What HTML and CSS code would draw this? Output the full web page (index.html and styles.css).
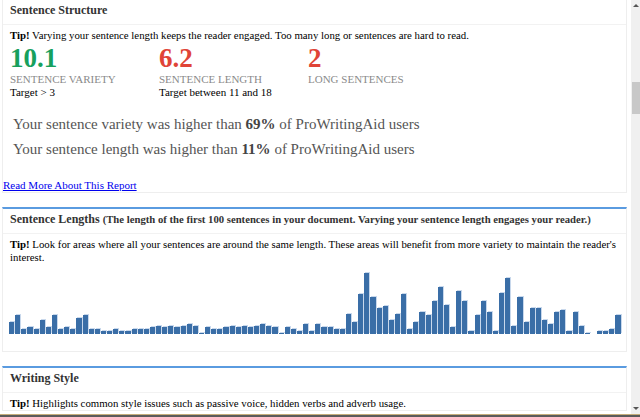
FILE: index.html
```html
<!DOCTYPE html>
<html lang="en">
<head>
  <meta charset="UTF-8">
  <title>Sentence Structure Report</title>
  <link rel="stylesheet" href="styles.css">
</head>
<body>
  <div class="page">
    <main class="report">
      <!-- Sentence Structure -->
      <section class="panel panel-top">
        <div class="panel-head">
          <h2>Sentence Structure</h2>
        </div>
        <div class="panel-body">
          <p class="tip"><b>Tip!</b> Varying your sentence length keeps the reader engaged. Too many long or sentences are hard to read.</p>
          <div class="stats">
            <div class="stat">
              <div class="stat-value good">10.1</div>
              <div class="stat-label">Sentence Variety</div>
              <div class="stat-target">Target &gt; 3</div>
            </div>
            <div class="stat">
              <div class="stat-value bad">6.2</div>
              <div class="stat-label">Sentence Length</div>
              <div class="stat-target">Target between 11 and 18</div>
            </div>
            <div class="stat">
              <div class="stat-value bad">2</div>
              <div class="stat-label">Long Sentences</div>
            </div>
          </div>
          <div class="compare">
            <p>Your sentence variety was higher than <b>69%</b> of ProWritingAid users</p>
            <p>Your sentence length was higher than <b>11%</b> of ProWritingAid users</p>
          </div>
        </div>
        <a class="more" href="#">Read More About This Report</a>
      </section>

      <!-- Sentence Lengths -->
      <section class="panel">
        <div class="panel-head">
          <h2>Sentence Lengths <small>(The length of the first 100 sentences in your document. Varying your sentence length engages your reader.)</small></h2>
        </div>
        <div class="panel-body">
          <p class="tip"><b>Tip!</b> Look for areas where all your sentences are around the same length. These areas will benefit from more variety to maintain the reader's interest.</p>
          <div class="chart" id="chart"></div>
        </div>
      </section>

      <!-- Writing Style -->
      <section class="panel">
        <div class="panel-head">
          <h2>Writing Style</h2>
        </div>
        <div class="panel-body">
          <p class="tip"><b>Tip!</b> Highlights common style issues such as passive voice, hidden verbs and adverb usage.</p>
        </div>
      </section>
    </main>

    <div class="scrollbar">
      <span class="arrow up"></span>
      <span class="thumb"></span>
      <span class="arrow down"></span>
    </div>
  </div>
  <div class="taskbar"></div>

  <script>
    // sentence lengths (in px) for the first 100 sentences
    const lengths = [12,19,5,7,5,14,7,19,5,7,5,16,19,5,5,3,3,5,3,3,
      5,5,5,7,8,7,8,7,8,10,8,1,7,5,5,7,8,7,8,7,
      8,10,8,7,1,7,5,3,10,3,10,7,7,5,5,20,12,40,61,37,
      26,28,14,20,40,5,12,22,19,33,47,29,7,43,33,3,19,33,22,3,
      41,56,8,37,12,26,26,14,10,22,24,3,22,8,1,0,3,3,5,19];

    const chart = document.getElementById('chart');
    lengths.forEach((h) => {
      const bar = document.createElement('span');
      bar.className = 'bar';
      bar.style.height = h + 'px';
      chart.appendChild(bar);
    });
  </script>
</body>
</html>
```

FILE: styles.css
```css
/* General */
* {
  margin: 0;
  padding: 0;
  box-sizing: border-box;
}

html, body {
  height: 100%;
  overflow: hidden;
}

body {
  font-family: 'Liberation Serif', 'Times New Roman', serif;
  font-size: 10.8px;
  color: #000;
  background: #fff;
}

.page {
  display: flex;
  height: 414px;
}

.report {
  flex: 1;
  padding: 0 4px 0 2px;
  overflow: hidden;
}

/* Panels */
.panel {
  border: 1px solid #eeeeee;
  border-top: 2px solid #5a9be0;
  margin-bottom: 14px;
  background: #fff;
}

.panel-top {
  border-top: none;
}

.panel-head {
  padding: 3px 7px 7px;
  border-bottom: 1px solid #f2f2f2;
}

.panel-head h2 {
  font-size: 12px;
  font-weight: bold;
  color: #333;
  line-height: 14px;
  white-space: nowrap;
}

.panel-head small {
  font-size: 10.7px;
  line-height: 1;
}

.panel-body {
  padding: 4px 3px 0 7px;
}

.tip {
  line-height: 13px;
}

/* Stats */
.stats {
  display: flex;
  margin-top: 3px;
}

.stat {
  width: 149px;
}

.stat-value {
  font-size: 27px;
  font-weight: bold;
  line-height: 27px;
}

.good {
  color: #17a05d;
}

.bad {
  color: #e04437;
}

.stat-label {
  margin-top: 1px;
  font-size: 11px;
  color: #8a8a8a;
  text-transform: uppercase;
  line-height: 13px;
}

.stat-target {
  font-size: 11px;
  line-height: 13px;
}

.compare {
  padding: 13px 0 0 3px;
  color: #555;
  font-size: 15px;
}

.compare p {
  line-height: 25px;
}

.compare b {
  color: #444;
}

.more {
  display: block;
  margin-top: 17px;
  font-size: 11px;
  color: #0000ee;
  line-height: 13px;
}

/* Chart */
.chart {
  display: flex;
  align-items: flex-end;
  gap: 1px;
  width: 611px;
  height: 66px;
  margin: 4px 0 17px -1px;
}

.bar {
  flex: 1;
  background: #3a6ea7;
  box-shadow: 1px -1px 0 #c8d8ec;
}

/* Fake window scrollbar */
.scrollbar {
  width: 9px;
  background: #f0f0f0;
  display: flex;
  flex-direction: column;
  align-items: flex-end;
}

.arrow {
  width: 0;
  height: 0;
  margin: 4px 1px 0 0;
  border-left: 3px solid transparent;
  border-right: 3px solid transparent;
}

.arrow.up {
  border-bottom: 3px solid #555;
}

.arrow.down {
  margin: auto 1px 4px 0;
  border-top: 3px solid #555;
}

.thumb {
  width: 8px;
  height: 32px;
  margin-top: 75px;
  background: #c8c8c8;
}

.taskbar {
  height: 3px;
  border-top: 1px solid #c5ad7a;
  background: #5a5a5a;
}
```
